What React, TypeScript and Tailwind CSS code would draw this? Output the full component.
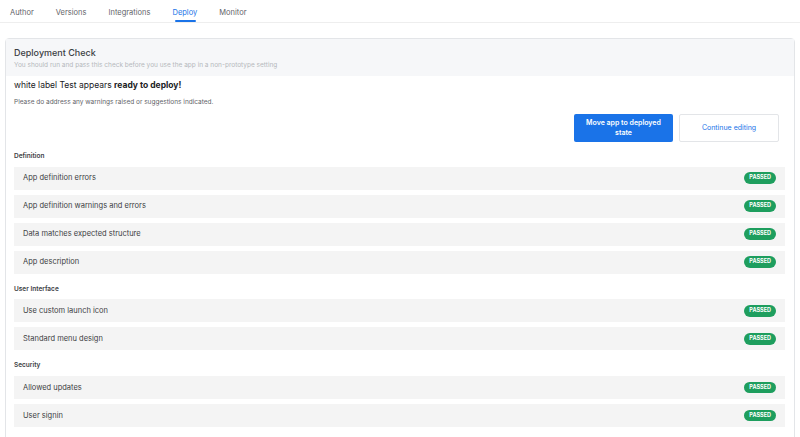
import React from 'react';

const TABS = ['Author', 'Versions', 'Integrations', 'Deploy', 'Monitor'];

const SECTIONS: { title: string; checks: string[] }[] = [
  {
    title: 'Definition',
    checks: [
      'App definition errors',
      'App definition warnings and errors',
      'Data matches expected structure',
      'App description',
    ],
  },
  { title: 'User Interface', checks: ['Use custom launch icon', 'Standard menu design'] },
  { title: 'Security', checks: ['Allowed updates', 'User signin'] },
];

function PassedBadge() {
  return (
    <span className="rounded-full bg-[#1e9e5e] px-[5px] py-[3px] text-[5.5px] font-bold leading-none text-white">
      PASSED
    </span>
  );
}

export default function App() {
  return (
    <div className="h-[437px] overflow-hidden bg-white font-['Inter',sans-serif] text-[#3c4043]">
      {/* Tabs */}
      <nav className="flex h-[23px] gap-[22px] border-b border-[#eeeeee] pl-[10px]">
        {TABS.map((tab) => {
          const active = tab === 'Deploy';
          return (
            <div
              key={tab}
              className={
                'relative flex items-start pt-[7px] text-[7.5px] ' +
                (active ? 'text-[#1a73e8]' : 'text-[#5f6368]')
              }
            >
              {tab}
              {active && <span className="absolute bottom-0 left-[3px] right-[1px] h-[2px] rounded bg-[#1a73e8]" />}
            </div>
          );
        })}
      </nav>

      {/* Card */}
      <div className="mx-[5px] mt-[15px] rounded-[4px] border border-[#e3e5e8] pb-4">
        <div className="bg-[#f6f7f9] px-[8px] pb-[6px] pt-[7px]">
          <div className="text-[9px] font-medium text-[#3c4043]">Deployment Check</div>
          <div className="mt-[1px] text-[6.5px] text-[#b5b8bc]">
            You should run and pass this check before you use the app in a non-prototype setting
          </div>
        </div>

        <div className="px-[8px] pt-[3px]">
          <div className="text-[8.5px] text-[#202124]">
            white label Test appears <span className="font-bold">ready to deploy!</span>
          </div>
          <div className="mt-[6px] text-[6.5px] text-[#5f6368]">
            Please do address any warnings raised or suggestions indicated.
          </div>

          <div className="mt-[6px] flex justify-end gap-[6px] pr-[7px]">
            <button className="h-[28px] w-[99px] rounded-[2px] bg-[#1a73e8] px-2 text-[7px] font-semibold leading-[10px] text-white">
              Move app to deployed state
            </button>
            <button className="h-[28px] w-[100px] rounded-[2px] border border-[#e3e5e8] bg-white text-[7px] text-[#1a73e8]">
              Continue editing
            </button>
          </div>

          {SECTIONS.map((section, i) => (
            <div key={section.title} className={i === 0 ? 'mt-[10px]' : 'mt-[11px]'}>
              <div className="mb-[5px] text-[6.5px] font-semibold text-[#3c4043]">{section.title}</div>
              <div className="flex flex-col gap-[5px]">
                {section.checks.map((check) => (
                  <div
                    key={check}
                    className="mr-[1px] flex h-[23px] items-center justify-between bg-[#f4f4f4] pl-[9px] pr-[9px] text-[7.5px] text-[#3c4043]"
                  >
                    <span>{check}</span>
                    <PassedBadge />
                  </div>
                ))}
              </div>
            </div>
          ))}
        </div>
      </div>
    </div>
  );
}
